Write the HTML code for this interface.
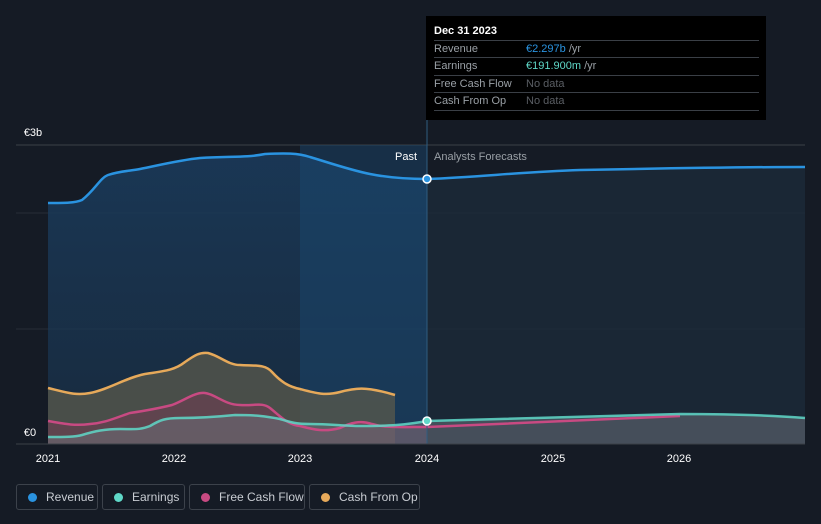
<!DOCTYPE html><html><head><style>
html,body{margin:0;width:821px;height:524px;overflow:hidden}
body{background:#151b25;font-family:"Liberation Sans",sans-serif;position:relative}
.tt{position:absolute;left:426px;top:16px;width:340px;height:104px;background:#000;color:#fff;font-size:11px}
.tt .h{position:absolute;left:8px;top:9px;font-weight:bold}
.row{position:absolute;left:8px;width:325px;border-top:1px solid #3a3f46;height:17px;line-height:17px;color:#9aa0a6}
.row span{position:absolute;left:92px}
.leg{position:absolute;top:484px;height:26px;border:1px solid #3c424b;border-radius:3px;color:#c8ccd2;font-size:12px;line-height:24px;box-sizing:border-box;white-space:nowrap;overflow:hidden}
.leg i{display:inline-block;width:9px;height:9px;border-radius:50%;margin:0 9px 0 11px;vertical-align:-1px}
</style></head><body>
<svg width="821" height="524" style="position:absolute;left:0;top:0">
<defs><linearGradient id="g" x1="0" y1="0" x2="0" y2="1"><stop offset="0" stop-color="#1a3a5a" stop-opacity=".9"/><stop offset="1" stop-color="#1a3550" stop-opacity=".6"/></linearGradient></defs>
<line x1="16" y1="145" x2="805" y2="145" stroke="#3a4048"/>
<line x1="16" y1="213" x2="805" y2="213" stroke="#262d37"/>
<line x1="16" y1="329" x2="805" y2="329" stroke="#262d37"/>
<path d="M48,203 C65,203 75,203 82,200 C95,190 100,178 108,175 C120,171 130,171 140,169 C160,165 180,160 200,158 C230,156 245,158 265,154 C285,153 298,153 310,157 C330,163 350,170 370,174 C390,178 410,179 427,179 L427,444 L48,444Z" fill="url(#g)"/>
<rect x="300" y="145" width="127" height="299" fill="#1b4a70" opacity=".45"/>
<path d="M427,179 C480,177 520,172 580,170 C680,168 740,167 805,167 L805,444 L427,444Z" fill="#1c2a3a" opacity=".8"/>
<path d="M48,388 C65,392 75,396 90,393 C110,389 125,378 145,374 C165,371 175,370 185,362 C195,355 200,352 208,353 C220,356 228,365 240,365 C255,366 265,364 272,372 C282,383 290,387 300,389 C315,393 325,396 340,392 C355,388 365,386 395,395 L395,444 L48,444Z" fill="#5a5a4c" opacity=".75"/>
<path d="M48,421 C65,424 75,426 90,424 C105,423 115,418 130,413 C150,410 160,408 172,405 C185,400 195,392 205,393 C215,394 225,405 240,405 C255,406 262,402 270,408 C280,416 288,425 300,426 C315,430 325,432 340,428 C350,423 360,420 372,424 C385,428 400,427 427,427 L427,444 L48,444Z" fill="#7a3a55" opacity=".45"/>
<path d="M48,437 C65,437 75,437 82,435 C95,431 105,429 120,429 C135,429 140,430 150,426 C160,420 165,418 180,418 C200,418 215,417 235,415 C255,415 265,416 280,419 C290,422 295,424 310,424 C330,424 345,426 360,426 C390,426 405,425 427,421 C480,419 540,418 680,414 C740,414 780,416 805,418 L805,444 L48,444Z" fill="#6a7079" opacity=".55"/>
<g fill="none" stroke-width="2.5">
<path d="M48,203 C65,203 75,203 82,200 C95,190 100,178 108,175 C120,171 130,171 140,169 C160,165 180,160 200,158 C230,156 245,158 265,154 C285,153 298,153 310,157 C330,163 350,170 370,174 C390,178 410,179 427,179 C480,177 520,172 580,170 C680,168 740,167 805,167" stroke="#2a93e0"/>
<path d="M48,388 C65,392 75,396 90,393 C110,389 125,378 145,374 C165,371 175,370 185,362 C195,355 200,352 208,353 C220,356 228,365 240,365 C255,366 265,364 272,372 C282,383 290,387 300,389 C315,393 325,396 340,392 C355,388 365,386 395,395" stroke="#e6a95a"/>
<path d="M48,421 C65,424 75,426 90,424 C105,423 115,418 130,413 C150,410 160,408 172,405 C185,400 195,392 205,393 C215,394 225,405 240,405 C255,406 262,402 270,408 C280,416 288,425 300,426 C315,430 325,432 340,428 C350,423 360,420 372,424 C385,428 400,427 427,427 C500,424 560,421 680,416" stroke="#c84a82"/>
<path d="M48,437 C65,437 75,437 82,435 C95,431 105,429 120,429 C135,429 140,430 150,426 C160,420 165,418 180,418 C200,418 215,417 235,415 C255,415 265,416 280,419 C290,422 295,424 310,424 C330,424 345,426 360,426 C390,426 405,425 427,421 C480,419 540,418 680,414 C740,414 780,416 805,418" stroke="#5fd8c8" stroke-opacity=".85"/>
</g>
<line x1="427" y1="16" x2="427" y2="444" stroke="#2f5c80"/>
<circle cx="427" cy="179" r="4" fill="#2a93e0" stroke="#fff" stroke-width="1.5"/>
<circle cx="427" cy="421" r="4" fill="#5fd8c8" stroke="#fff" stroke-width="1.5"/>
<line x1="16" y1="444" x2="805" y2="444" stroke="#3a4048"/>
<g fill="#fff" font-size="11" font-family="Liberation Sans" text-anchor="middle">
<text x="48" y="462">2021</text><text x="174" y="462">2022</text><text x="300" y="462">2023</text><text x="427" y="462">2024</text><text x="553" y="462">2025</text><text x="679" y="462">2026</text>
<text x="33" y="136">€3b</text><text x="30" y="436">€0</text>
<text x="406" y="160" text-anchor="middle">Past</text>
<text x="434" y="160" text-anchor="start" fill="#9aa0a6">Analysts Forecasts</text>
</g>
</svg>
<div class="tt"><div class="h">Dec 31 2023</div>
<div class="row" style="top:24px">Revenue<span style="color:#2a93e0">€2.297b <b style="font-weight:normal;color:#9aa0a6">/yr</b></span></div>
<div class="row" style="top:41px">Earnings<span style="color:#5fd8c8">€191.900m <b style="font-weight:normal;color:#9aa0a6">/yr</b></span></div>
<div class="row" style="top:59px">Free Cash Flow<span style="color:#5a5e64">No data</span></div>
<div class="row" style="top:76px;border-bottom:1px solid #3a3f46">Cash From Op<span style="color:#5a5e64">No data</span></div>
</div>
<div class="leg" style="left:16px;width:82px"><i style="background:#2a93e0"></i>Revenue</div>
<div class="leg" style="left:102px;width:83px"><i style="background:#5fd8c8"></i>Earnings</div>
<div class="leg" style="left:189px;width:116px"><i style="background:#c84a82"></i>Free Cash Flow</div>
<div class="leg" style="left:309px;width:111px"><i style="background:#e6a95a"></i>Cash From Op</div>
</body></html>
